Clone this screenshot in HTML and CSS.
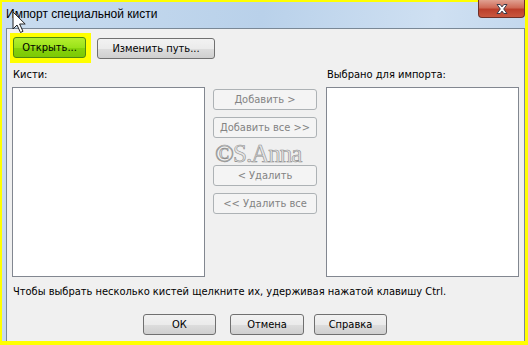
FILE: index.html
```html
<!DOCTYPE html>
<html lang="ru">
<head>
    <meta charset="UTF-8">
    <title>Импорт специальной кисти</title>
    <link rel="stylesheet" href="styles.css">
</head>
<body>
    <div class="screen">
        <div class="window">
            <!-- Заголовок окна -->
            <div class="title-bar">
                <span class="title">Импорт специальной кисти</span>
                <div class="close-btn">
                    <svg width="20" height="12" viewBox="0 0 20 12">
                        <path d="M5 1.5h3.2l1.8 2.4 1.8-2.4h3.2l-3.3 4.5 3.3 4.5h-3.2l-1.8-2.4-1.8 2.4h-3.2l3.3-4.5z" fill="#fff" stroke="#3b3b4a" stroke-width="1"/>
                    </svg>
                </div>
            </div>

            <div class="panel">
                <!-- Кнопки сверху -->
                <div class="toolbar">
                    <div class="highlight">
                        <button class="btn btn-open">Открыть...</button>
                    </div>
                    <button class="btn btn-path">Изменить путь...</button>
                </div>

                <!-- Списки -->
                <div class="lists">
                    <div class="column">
                        <div class="list-label">Кисти:</div>
                        <div class="listbox"></div>
                    </div>
                    <div class="middle">
                        <button class="btn btn-mid" disabled>Добавить &gt;</button>
                        <button class="btn btn-mid" disabled>Добавить все &gt;&gt;</button>
                        <button class="btn btn-mid" disabled>&lt; Удалить</button>
                        <button class="btn btn-mid" disabled>&lt;&lt; Удалить все</button>
                        <span class="watermark">©S.Anna</span>
                    </div>
                    <div class="column">
                        <div class="list-label">Выбрано для импорта:</div>
                        <div class="listbox"></div>
                    </div>
                </div>

                <div class="hint">Чтобы выбрать несколько кистей щелкните их, удерживая нажатой клавишу Ctrl.</div>

                <!-- Кнопки диалога -->
                <div class="footer">
                    <button class="btn btn-ok">ОК</button>
                    <button class="btn btn-cancel">Отмена</button>
                    <button class="btn btn-help">Справка</button>
                </div>
            </div>
        </div>

        <!-- Курсор мыши -->
        <svg class="cursor" width="14" height="24" viewBox="0 0 14 24">
            <path d="M1 1v17l4-4 3.5 7.5 2.5-1.2-3.4-7.3h5.6z" fill="#fff" stroke="#222" stroke-width="1"/>
        </svg>
    </div>
</body>
</html>
```

FILE: styles.css
```css
body {
    margin: 0;
    font-family: "DejaVu Sans Condensed", "DejaVu Sans", sans-serif;
}
.screen {
    position: relative;
    width: 528px;
    height: 345px;
    box-sizing: border-box;
    padding: 2px 3px 4px 2px;
    background: #ffff00;
}
.window {
    display: flex;
    flex-direction: column;
    height: 100%;
    background: linear-gradient(100deg, #c9dcef 0%, #b9d1ea 45%, #cfe0f2 75%, #bcd3eb 100%);
}
.title-bar {
    display: flex;
    align-items: flex-start;
    justify-content: space-between;
    height: 26px;
    padding-left: 4px;
}
.title {
    margin-top: 5px;
    font-family: "Liberation Sans", sans-serif;
    font-size: 12px;
    color: #000;
}
.close-btn {
    display: flex;
    align-items: center;
    justify-content: center;
    width: 45px;
    height: 17px;
    margin-top: -2px;
    border: 1px solid #6e3028;
    border-top: none;
    border-radius: 0 0 4px 4px;
    background: linear-gradient(#e0a192 0%, #cf6a56 45%, #bb3f2b 55%, #c9573f 100%);
}
.panel {
    flex: 1;
    margin-left: 4px;
    padding: 0 6px 0 5px;
    border: 1px solid #7a8896;
    border-bottom: none;
    background: #f0f0f0;
    font-size: 11px;
    color: #000;
}
.toolbar {
    display: flex;
    align-items: center;
    margin-top: 4px;
}
.highlight {
    margin-left: -2px;
    padding: 4px 5px 5px 3px;
    background: #ffff00;
}
.btn {
    font-family: "DejaVu Sans Condensed", "DejaVu Sans", sans-serif;
    font-size: 11px;
    height: 21px;
    padding: 0;
    border: 1px solid #707070;
    border-radius: 3px;
    color: #000;
    background: linear-gradient(#f2f2f2 0%, #ebebeb 50%, #dddddd 51%, #cfcfcf 100%);
}
.btn-open {
    width: 73px;
    border-color: #4e8a10;
    background: linear-gradient(#b4ef2e 0%, #9be21a 50%, #86d40c 51%, #7cc806 100%);
}
.btn-path {
    width: 118px;
    margin-left: 6px;
}
.lists {
    display: flex;
    margin-top: 5px;
}
.column {
    display: flex;
    flex-direction: column;
}
.list-label {
    height: 14px;
    margin-bottom: 5px;
    margin-left: 1px;
}
.listbox {
    width: 191px;
    height: 188px;
    border: 1px solid #828790;
    background: #fff;
}
.middle {
    position: relative;
    display: flex;
    flex-direction: column;
    gap: 7px;
    width: 104px;
    margin: 21px 9px 0 8px;
}
.btn-mid {
    width: 104px;
    border-color: #adb2b5;
    color: #838383;
    background: #f4f4f4;
}
.btn-mid:nth-child(3) {
    margin-top: 20px;
}
.watermark {
    position: absolute;
    left: 2px;
    top: 51px;
    font-family: "Liberation Serif", serif;
    font-size: 25px;
    letter-spacing: -1px;
    color: #e6e6e6;
    -webkit-text-stroke: 0.6px #8c8c8c;
}
.hint {
    margin-top: 8px;
    margin-left: 1px;
}
.footer {
    display: flex;
    justify-content: center;
    margin-top: 16px;
}
.btn-ok {
    width: 73px;
}
.btn-cancel {
    width: 74px;
    margin-left: 14px;
}
.btn-help {
    width: 73px;
    margin-left: 10px;
}
.cursor {
    position: absolute;
    left: 12px;
    top: 11px;
}
```
